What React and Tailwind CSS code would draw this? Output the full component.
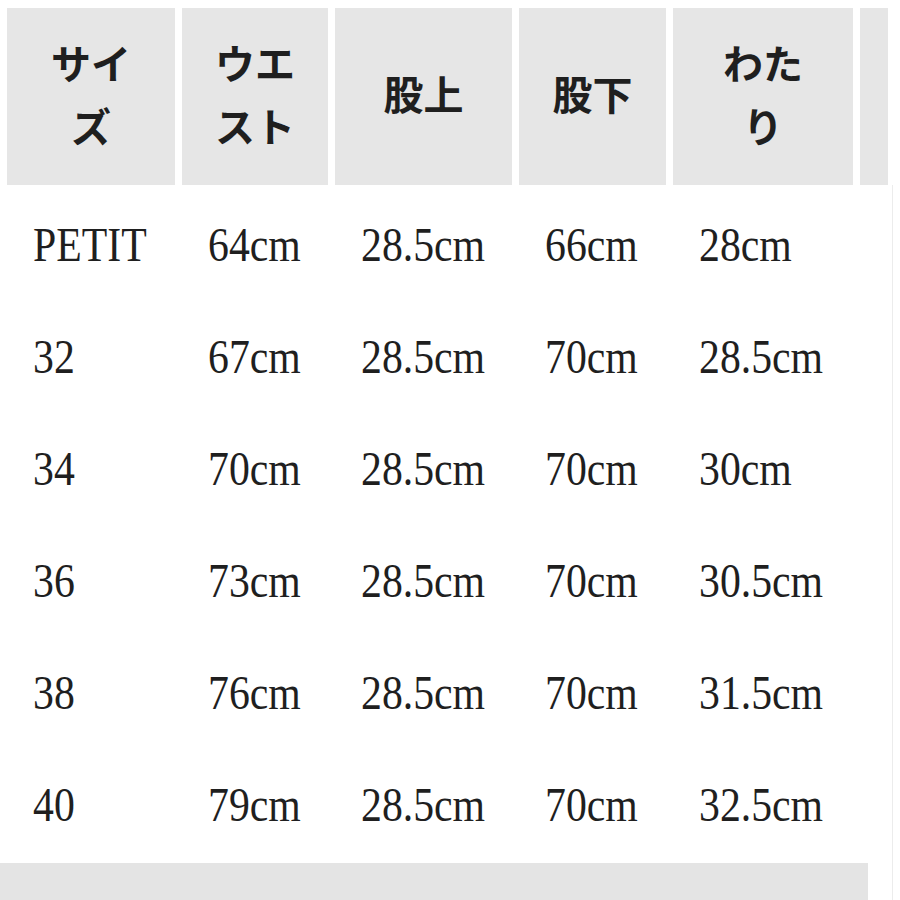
import React from 'react';

const headers = [
  ['サイ', 'ズ'],
  ['ウエ', 'スト'],
  ['股上'],
  ['股下'],
  ['わた', 'り'],
  [],
];

const rows = [
  ['PETIT', '64cm', '28.5cm', '66cm', '28cm'],
  ['32', '67cm', '28.5cm', '70cm', '28.5cm'],
  ['34', '70cm', '28.5cm', '70cm', '30cm'],
  ['36', '73cm', '28.5cm', '70cm', '30.5cm'],
  ['38', '76cm', '28.5cm', '70cm', '31.5cm'],
  ['40', '79cm', '28.5cm', '70cm', '32.5cm'],
];

const gridCols = 'grid grid-cols-[168px_146px_177px_147px_180px_28px] gap-x-[7px]';

export default function App() {
  return (
    <div className="w-[900px] h-[900px] overflow-hidden bg-white text-[#1f1f1f]">
      {/* Header */}
      <div className={`${gridCols} pl-[7px] pt-[8px]`}>
        {headers.map((lines, i) => (
          <div
            key={i}
            className="h-[177px] bg-[#e6e6e6] flex flex-col items-center justify-center font-bold text-[40px] leading-[63px] font-['Liberation_Serif','Noto_Sans_CJK_JP',serif]"
          >
            {lines.map((l) => (
              <span key={l}>{l}</span>
            ))}
          </div>
        ))}
      </div>

      {/* Body */}
      <div className="w-[893px] border-r border-[#ececec] pt-[4px]">
        {rows.map((row) => (
          <div key={row[0]} className={`${gridCols} pl-[7px] h-[112px] items-center`}>
            {row.map((cell, j) => (
              <div key={j} className="pl-[26px] whitespace-nowrap">
                <span className="inline-block origin-left scale-x-[0.87] text-[48px] leading-none font-['Liberation_Serif',serif]">
                  {cell}
                </span>
              </div>
            ))}
          </div>
        ))}
        <div className="mt-[2px] w-[868px] h-[40px] bg-[#e4e4e4]"></div>
      </div>
    </div>
  );
}
